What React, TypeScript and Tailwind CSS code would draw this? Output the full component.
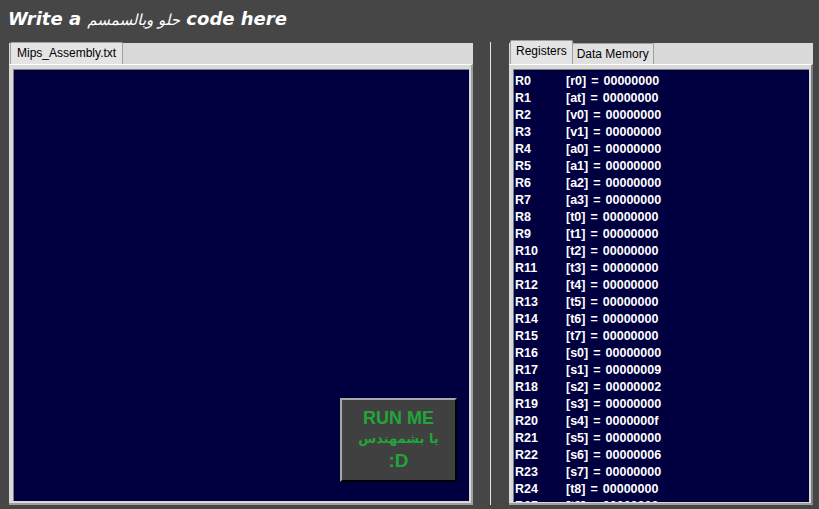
const names = [
  'r0', 'at', 'v0', 'v1', 'a0', 'a1', 'a2', 'a3',
  't0', 't1', 't2', 't3', 't4', 't5', 't6', 't7',
  's0', 's1', 's2', 's3', 's4', 's5', 's6', 's7',
  't8', 't9',
];

const values: Record<number, string> = {
  17: '00000009',
  18: '00000002',
  20: '0000000f',
  22: '00000006',
};

const App = () => {
  return (
    <div className="w-[819px] h-[509px] bg-[#464646] flex flex-col overflow-hidden font-['Liberation_Sans',sans-serif]">
      {/* Title */}
      <div className="h-[38px] pl-[8px] pt-[6px] text-white text-[18px] font-bold italic font-['DejaVu_Sans',sans-serif] leading-[26px] whitespace-nowrap">
        Write a <span className="font-normal text-[15px]">حلو وبالسمسم</span> code here
      </div>

      <div className="flex pl-[9px] pt-[4px]">
        {/* Editor panel */}
        <div className="w-[464px] h-[463px] flex flex-col">
          <div className="h-[22px] flex items-end bg-[#d9d9d9] border-t border-[#464646]">
            <div className="h-[22px] -mt-px px-[6px] bg-[#e4e4e4] border border-b-0 border-[#a0a0a0] rounded-t-[2px] text-[12px] text-black leading-[20px] ml-px">
              Mips_Assembly.txt
            </div>
          </div>
          <div className="flex-1 bg-[#d9d9d9] border-t border-white border-r-2 border-r-[#a0a0a0] border-b-2 border-b-[#a0a0a0] pl-[4px] pr-[2px] pt-[4px] pb-[2px]">
            <div className="w-full h-full bg-[#000040] border-t border-l border-[#808080] flex items-end justify-end pr-[12px] pb-[19px]">
              <div className="w-[117px] h-[84px] bg-[#404040] border-t-2 border-l-2 border-t-[#a8a8a8] border-l-[#a8a8a8] border-b-2 border-r-2 border-b-black border-r-black flex flex-col items-center text-[#1fa53a] font-bold">
                <div className="text-[18px] leading-[22px] mt-[7px]">RUN ME</div>
                <div className="text-[13px] leading-[20px] font-['DejaVu_Sans',sans-serif]">يا بشمهندس</div>
                <div className="text-[19px] leading-[24px]">:D</div>
              </div>
            </div>
          </div>
        </div>

        {/* Divider */}
        <div className="ml-[17px] w-px h-[463px] bg-[#e6e6e6]" />

        {/* Registers panel */}
        <div className="ml-[18px] w-[304px] h-[463px] flex flex-col">
          <div className="h-[22px] flex items-end bg-[#d9d9d9] border-t border-[#464646]">
            <div className="h-[24px] -mt-[3px] px-[5px] bg-[#e4e4e4] border border-b-0 border-[#a0a0a0] rounded-t-[2px] text-[12px] text-black leading-[20px] ml-px relative z-10">
              Registers
            </div>
            <div className="h-[21px] px-[4px] bg-[#e0e0e0] border border-b-0 border-l-0 border-[#a0a0a0] rounded-t-[2px] text-[12px] text-black leading-[21px]">
              Data Memory
            </div>
          </div>
          <div className="flex-1 min-h-0 bg-[#d9d9d9] border-t border-white border-r-2 border-r-[#808080] border-b-2 border-b-[#a0a0a0] pl-[4px] pr-[2px] pt-[4px] pb-[1px]">
            <div className="w-full h-full bg-[#000040] border-t border-l border-[#808080] overflow-hidden pt-[3px]">
              {names.map((n, i) => (
                <div key={n} className="flex h-[17px] items-center text-white font-bold text-[12.5px] leading-[17px] whitespace-nowrap">
                  <span className="w-[52px] pl-[1px]">R{i}</span>
                  <span>[{n}]</span>
                  <span className="px-[5px]">=</span>
                  <span>{values[i] ?? '00000000'}</span>
                </div>
              ))}
            </div>
          </div>
        </div>
      </div>
    </div>
  );
};

export default App;
